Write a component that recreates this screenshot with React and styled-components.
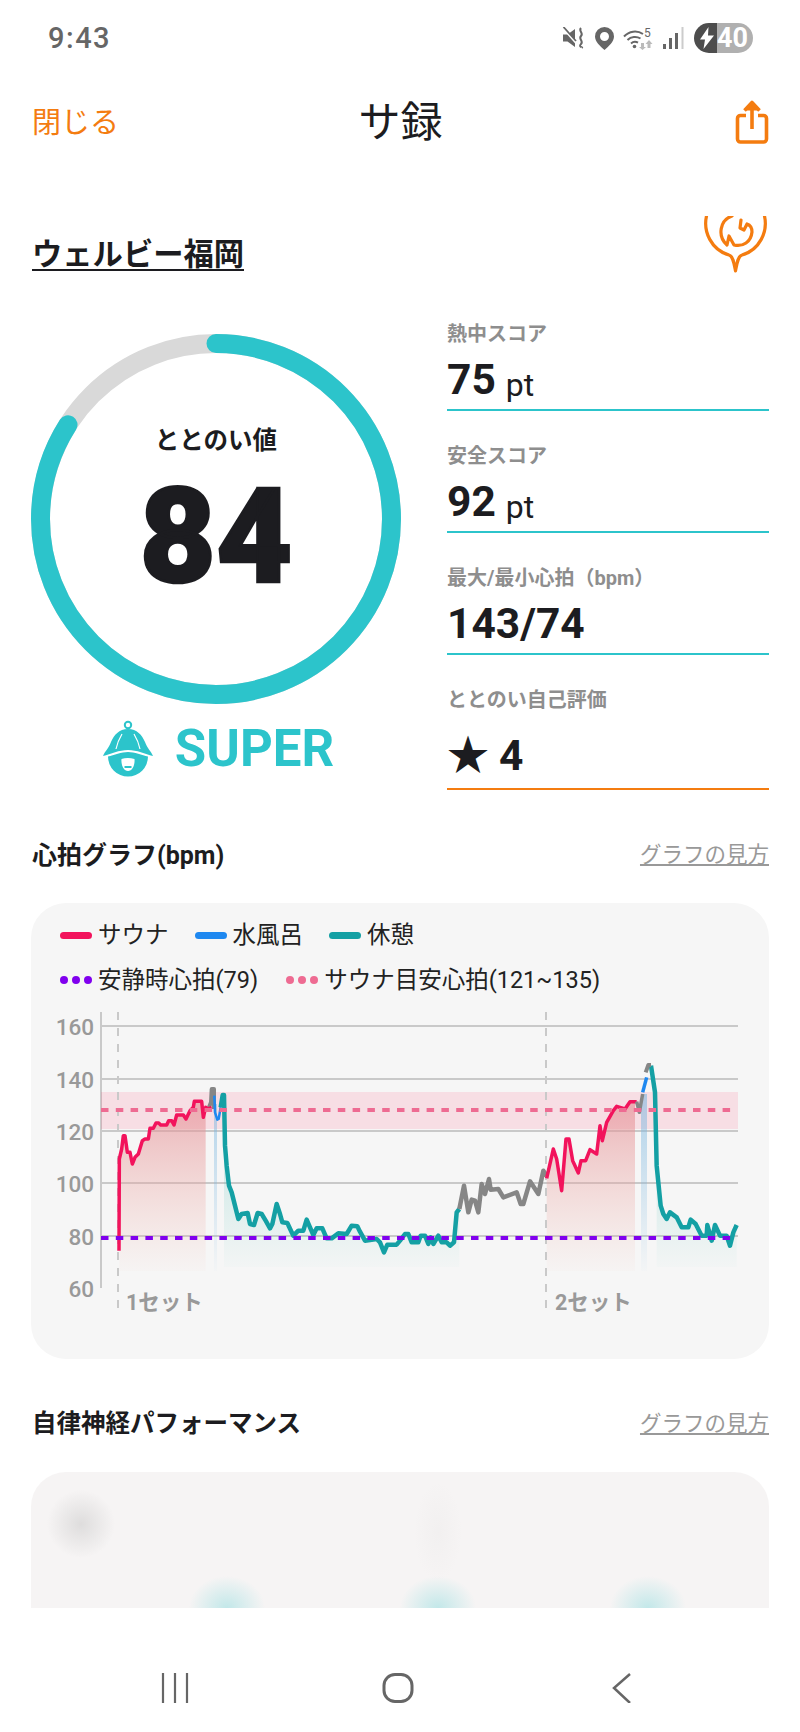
import React from 'react'
import styled, { createGlobalStyle } from 'styled-components'

const TEAL = '#2cc4cb'
const ORANGE = '#f47c10'
const INK = '#1c1c20'

const GlobalStyle = createGlobalStyle`
  html, body { margin: 0; padding: 0; background: #fff; }
  body { font-family: Roboto, "Noto Sans CJK JP", sans-serif; color: ${INK}; }
`

/* 心拍グラフ: traced from the picture, x = ox + zx / 3, y = 980 + zy / 3 */
const toPage = (pts, ox) => pts.map(([x, y]) => [ox + x / 3, 980 + y / 3])
const line = (pts) => pts.map((p) => p.join(',')).join(' ')
const area = (pts, bottom) =>
  `${pts[0][0]},${bottom} ${line(pts)} ${pts[pts.length - 1][0]},${bottom}`

const L = 30
const R = 400

const sauna1 = toPage([[267,815],[268,540],[275,510],[280,470],[285,470],[292,520],[300,520],[307,555],[315,535],[325,525],[337,485],[345,480],[355,480],[360,448],[370,448],[378,432],[386,432],[392,438],[410,438],[416,425],[425,425],[432,438],[440,408],[460,408],[468,420],[480,395],[490,385],[493,367],[515,367],[520,415],[527,385],[535,390],[545,385]], L)
const walk1 = toPage([[537,385],[543,370],[545,330],[552,330],[552,390]], L)
const water1 = toPage([[553,350],[555,400],[562,422],[566,420],[572,385]], L)
const rest1 = [
  ...toPage([[572,385],[578,348],[582,348],[585,500],[590,560],[597,620],[605,640],[615,680],[625,720],[635,705],[653,702],[660,735],[672,738],[683,702],[695,705],[707,725],[720,748],[727,735],[740,675],[750,705],[757,730],[772,732],[790,770],[805,755],[820,755],[830,722],[840,745],[850,768],[860,748],[877,748],[890,778],[905,778],[925,763],[950,765],[965,740],[982,742],[990,758],[1005,785],[1040,780],[1050,790],[1062,820],[1072,797],[1085,797],[1100,797]], L),
  ...toPage([[0,785],[15,765],[25,765],[35,790],[55,790],[62,770],[75,770],[85,795],[92,775],[100,795],[115,770],[125,790],[140,790],[150,800],[162,790],[170,700],[178,690]], R),
]
const walk2 = toPage([[178,690],[192,620],[205,700],[215,662],[225,665],[235,700],[245,615],[255,645],[267,600],[272,632],[295,630],[310,655],[350,640],[362,675],[370,675],[390,607],[415,645],[430,575],[440,590]], R)
const sauna2 = toPage([[440,598],[460,510],[470,540],[485,635],[498,480],[507,480],[518,545],[535,582],[543,545],[557,545],[570,512],[590,525],[600,440],[607,485],[620,430],[640,395],[650,382],[675,390],[690,368],[710,368]], R)
const walk3 = toPage([[710,368],[718,400],[728,345]], R)
const water2 = toPage([[728,340],[740,295]], R)
const walk4 = toPage([[737,280],[745,258],[753,258]], R)
const rest2 = toPage([[753,260],[765,340],[770,560],[782,680],[790,705],[800,720],[810,700],[830,715],[845,745],[865,745],[872,722],[887,735],[905,770],[920,770],[922,738],[935,785],[945,738],[960,770],[980,770],[990,800],[1000,760],[1010,738]], R)

const saunaFill1 = sauna1.filter(([x]) => x <= 207 && x > 119)
const saunaFill2 = sauna2.concat([[635, 1103]]).filter(([x]) => x <= 636)
const restFill1 = rest1.slice(2)

const gridRows = [
  { label: 160, y: 1027 },
  { label: 140, y: 1080 },
  { label: 120, y: 1132 },
  { label: 100, y: 1184 },
  { label: 80, y: 1237 },
]

const HeartChart = () => (
  <ChartSvg viewBox="31 996 738 339" width="738" height="339">
    <defs>
      <linearGradient id="redFill" gradientUnits="userSpaceOnUse" x1="0" y1="1110" x2="0" y2="1272">
        <stop offset="0" stopColor="#e58f95" stopOpacity="0.62" />
        <stop offset="1" stopColor="#f2b6aa" stopOpacity="0.04" />
      </linearGradient>
      <linearGradient id="tealFill" gradientUnits="userSpaceOnUse" x1="0" y1="1150" x2="0" y2="1268">
        <stop offset="0" stopColor="#4dbfb4" stopOpacity="0.24" />
        <stop offset="1" stopColor="#4dbfb4" stopOpacity="0.02" />
      </linearGradient>
      <linearGradient id="blueFill" gradientUnits="userSpaceOnUse" x1="0" y1="1090" x2="0" y2="1272">
        <stop offset="0" stopColor="#7db8e0" stopOpacity="0.6" />
        <stop offset="1" stopColor="#7db8e0" stopOpacity="0.02" />
      </linearGradient>
    </defs>

    {gridRows.map((row) => (
      <g key={row.label}>
        <line x1="101" x2="738" y1={row.y} y2={row.y} stroke="#c9c9c9" strokeWidth="2" />
        <AxisText x="94" y={row.y + 9} textAnchor="end">{row.label}</AxisText>
      </g>
    ))}
    <AxisText x="94" y="1298" textAnchor="end">60</AxisText>
    <line x1="101" x2="101" y1="1013" y2="1289" stroke="#c9c9c9" strokeWidth="2" />

    <rect x="101" y="1093" width="637" height="37" fill="#ff2f63" fillOpacity="0.12" />

    <polygon points={area(saunaFill1, 1272)} fill="url(#redFill)" />
    <polygon points={area(saunaFill2, 1272)} fill="url(#redFill)" />
    <polygon points={area(restFill1, 1268)} fill="url(#tealFill)" />
    <polygon points={area(rest2.slice(2), 1268)} fill="url(#tealFill)" />
    <rect x="214" y="1105" width="3" height="167" fill="url(#blueFill)" />
    <rect x="641" y="1095" width="6" height="177" fill="url(#blueFill)" />

    <line x1="118" x2="118" y1="1013" y2="1315" stroke="#c9c9c9" strokeWidth="2" strokeDasharray="8 8" />
    <line x1="546" x2="546" y1="1013" y2="1315" stroke="#c9c9c9" strokeWidth="2" strokeDasharray="8 8" />

    <Trace points={line(walk1)} stroke="#868686" strokeWidth="4" />
    <Trace points={line(sauna1)} stroke="#f2135c" strokeWidth="3.5" />
    <Trace points={line(water1)} stroke="#1e88f0" strokeWidth="2.5" />
    <Trace points={line(rest1)} stroke="#14a0a4" strokeWidth="4.5" />
    <Trace points={line(walk2)} stroke="#868686" strokeWidth="4.5" />
    <Trace points={line(sauna2)} stroke="#f2135c" strokeWidth="3.5" />
    <Trace points={line(walk3)} stroke="#868686" strokeWidth="3.5" />
    <Trace points={line(water2)} stroke="#1e88f0" strokeWidth="3.5" />
    <Trace points={line(rest2)} stroke="#14a0a4" strokeWidth="4.5" />
    <Trace points={line(walk4)} stroke="#868686" strokeWidth="4" />

    <line x1="101" x2="732" y1="1111" y2="1111" stroke="#ee6b92" strokeWidth="4" strokeDasharray="7.5 7.3" />
    <line x1="101" x2="732" y1="1239" y2="1239" stroke="#8000ee" strokeWidth="4" strokeDasharray="7.5 7.3" />

    <SetText x="126" y="1311">1セット</SetText>
    <SetText x="555" y="1311">2セット</SetText>
  </ChartSvg>
)

/* ICONS */
const MuteIcon = () => (
  <svg width="23" height="22" viewBox="0 0 23 22">
    <path d="M1 7.5h4.5L13 2v18l-7.500-5.500H1z" fill="#666" />
    <line x1="1" y1="1" x2="15" y2="17" stroke="#fff" strokeWidth="2" />
    <line x1="1.500" y1="0" x2="14" y2="14" stroke="#666" strokeWidth="1.800" />
    <path d="M19 1c-3 3 3 5 0 8s3 5 0 8 2 3 1 4" fill="none" stroke="#666" strokeWidth="2" />
  </svg>
)

const PinIcon = () => (
  <svg width="19" height="23" viewBox="0 0 19 23">
    <path fillRule="evenodd" d="M9.500 0a9.500 9.500 0 0 1 9.500 9.500c0 5-5 9.500-9.500 13.500C5 19 0 14.500 0 9.500A9.500 9.500 0 0 1 9.500 0zm0 5a4.500 4.500 0 1 0 0 9 4.500 4.500 0 0 0 0-9z" fill="#666" />
  </svg>
)

const WifiIcon = () => (
  <WifiSvg width="30" height="24" viewBox="0 0 30 24">
    <path d="M1 10.500c5-5.500 13-6.500 19-2.500M4.500 14c3.500-3.500 9-4 13-1.500M8 17.500c2-1.800 5-2 7-.8" fill="none" stroke="#666" strokeWidth="2" />
    <circle cx="11.500" cy="20.500" r="1.800" fill="#666" />
    <WifiBand x="21" y="11">5</WifiBand>
    <path d="M18 17h3v4h2l-3.500 3L16 21h2zM24.500 22v-4h-2l3.500-4 3.500 4h-2v4z" fill="#bbb" />
  </WifiSvg>
)

const SignalIcon = () => (
  <svg width="22" height="23" viewBox="0 0 22 23">
    <rect x="0" y="17" width="3" height="5" fill="#666" />
    <rect x="6" y="11" width="3" height="11" fill="#666" />
    <rect x="12" y="6" width="3" height="16" fill="#666" />
    <rect x="18.500" y="0" width="2" height="22" fill="#ccc" />
  </svg>
)

const BoltIcon = () => (
  <svg width="14" height="22" viewBox="0 0 14 22">
    <path d="M8.500 0L0 12.500h5L3.500 22 14 8.500H8z" fill="#fff" />
  </svg>
)

const ShareIcon = () => (
  <svg width="34" height="44" viewBox="0 0 34 44" fill="none" stroke={ORANGE} strokeWidth="3.600">
    <path d="M11 15.500H5.500a3 3 0 0 0-3 3V39a3 3 0 0 0 3 3h23a3 3 0 0 0 3-3V18.500a3 3 0 0 0-3-3H23" />
    <path d="M17 29V3" />
    <path d="M9.500 10.500L17 2.500l7.500 8" fill={ORANGE} strokeLinejoin="round" />
  </svg>
)

const OnsenIcon = () => (
  <svg width="64" height="57" viewBox="704 216 64 57" fill="none" stroke={ORANGE} strokeWidth="3.200" strokeLinecap="round" strokeLinejoin="round">
    <path d="M707 214C702 232 712 250 729 255c4 1 5 8 6.500 16 1.500-8 2.500-15 6.500-16 17-5 27-23 22-41" />
    <path d="M732 216c-12 4-15 20-5 29l2-9 5 9c9 2 17-3 18-13 0-4-2-7-5-8l-3 6-4-2 1-8" />
  </svg>
)

const BoyIcon = () => (
  <svg width="50" height="57" viewBox="104 719 50 57">
    <circle cx="129" cy="724" r="3.200" fill="none" stroke={TEAL} strokeWidth="2" />
    <path d="M104 755c2-5 6-8 8-14 3-7 8-13 17-13s14 6 17 13c2 6 6 9 8 14-8-2-16-6-25-6s-17 4-25 6z" fill={TEAL} />
    <path d="M123 733c-3 5-5 10-6 15M135 733c3 5 5 10 6 15" fill="none" stroke="#fff" strokeWidth="1.200" />
    <path d="M109 755.500c6-1.500 13.500-4.500 20-4.500s14 3 20 4.500a20 20 0 1 1-40 0z" fill={TEAL} />
    <path d="M122.500 758c4-1.200 8.500-1.200 13 0 .5 6-2 12-6.500 12s-7-6-6.500-12z" fill="#fff" />
    <rect x="125.500" y="765" width="7" height="2" fill={TEAL} />
  </svg>
)

const App = () => {
  const circumference = 2 * Math.PI * 175.5
  const arc = 0.84 * circumference

  return (
    <Page>
      <GlobalStyle />

      <StatusBar>
        <Clock>9:43</Clock>
        <StatusIcons>
          <MuteIcon />
          <PinIcon />
          <WifiIcon />
          <SignalIcon />
          <Battery>
            <BatteryCharge><BoltIcon /></BatteryCharge>
            <BatteryLevel>40</BatteryLevel>
          </Battery>
        </StatusIcons>
      </StatusBar>

      <Header>
        <CloseLink>閉じる</CloseLink>
        <Title>サ録</Title>
        <ShareButton><ShareIcon /></ShareButton>
      </Header>

      <VenueRow>
        <VenueName>ウェルビー福岡</VenueName>
        <OnsenIcon />
      </VenueRow>

      <Summary>
        <ScoreColumn>
          <Ring>
            <svg width="370" height="370" viewBox="0 0 370 370">
              <circle cx="185" cy="185" r="175.500" fill="none" stroke="#d9d9d9" strokeWidth="19" />
              <circle
                cx="185"
                cy="185"
                r="175.500"
                fill="none"
                stroke={TEAL}
                strokeWidth="19"
                strokeLinecap="round"
                strokeDasharray={`${arc} ${circumference}`}
                transform="rotate(-90 185 185)"
              />
            </svg>
            <RingText>
              <RingLabel>ととのい値</RingLabel>
              <RingValue>84</RingValue>
            </RingText>
          </Ring>
          <Rank>
            <BoyIcon />
            <RankName>SUPER</RankName>
          </Rank>
        </ScoreColumn>

        <Stats>
          <Stat>
            <StatLabel>熱中スコア</StatLabel>
            <StatValue>75<StatUnit>pt</StatUnit></StatValue>
          </Stat>
          <Stat>
            <StatLabel>安全スコア</StatLabel>
            <StatValue>92<StatUnit>pt</StatUnit></StatValue>
          </Stat>
          <Stat>
            <StatLabel>最大/最小心拍（bpm）</StatLabel>
            <StatValue>143/74</StatValue>
          </Stat>
          <Stat $accent={ORANGE}>
            <StatLabel>ととのい自己評価</StatLabel>
            <StatValue $tall><Star>★</Star>4</StatValue>
          </Stat>
        </Stats>
      </Summary>

      <SectionHead>
        <SectionTitle $size={25}>心拍グラフ(bpm)</SectionTitle>
        <HelpLink>グラフの見方</HelpLink>
      </SectionHead>

      <ChartCard>
        <Legend $gap={26}>
          <LegendItem><Swatch $color="#f2135c" />サウナ</LegendItem>
          <LegendItem><Swatch $color="#1e88f0" />水風呂</LegendItem>
          <LegendItem><Swatch $color="#14a0a4" />休憩</LegendItem>
        </Legend>
        <Legend $gap={28}>
          <LegendItem>
            <Dots $color="#8000ee"><i /><i /><i /></Dots>安静時心拍(79)
          </LegendItem>
          <LegendItem>
            <Dots $color="#ee6b92"><i /><i /><i /></Dots>サウナ目安心拍(121~135)
          </LegendItem>
        </Legend>
        <HeartChart />
      </ChartCard>

      <SectionHead>
        <SectionTitle $size={24.5}>自律神経パフォーマンス</SectionTitle>
        <HelpLink>グラフの見方</HelpLink>
      </SectionHead>

      <LoadingCard />

      <NavBar>
        <svg width="28" height="30" viewBox="0 0 28 30" stroke="#666" strokeWidth="2.200">
          <path d="M2 0v30M14 0v30M26 0v30" />
        </svg>
        <NavHome width="32" height="30" viewBox="0 0 32 30" fill="none" stroke="#666" strokeWidth="3">
          <rect x="2" y="1.500" width="28" height="27" rx="11" />
        </NavHome>
        <svg width="20" height="30" viewBox="0 0 20 30" fill="none" stroke="#666" strokeWidth="2.500">
          <path d="M18 1L2 15l16 15" />
        </svg>
      </NavBar>
    </Page>
  )
}

/* STYLED-COMPONENTS */

const Page = styled.div`
  width: 800px;
  height: 1732px;
  overflow: hidden;
  background: #fff;
`

const StatusBar = styled.div`
  display: flex;
  align-items: center;
  justify-content: space-between;
  height: 76px;
  padding: 0 47px 0 48px;
  box-sizing: border-box;
`

const Clock = styled.div`
  font-size: 29px;
  font-weight: 500;
  letter-spacing: 1.5px;
  color: #666;
`

const StatusIcons = styled.div`
  display: flex;
  align-items: center;
  gap: 9.500px;
`

const WifiSvg = styled.svg`
  overflow: visible;
`

const WifiBand = styled.text`
  font-size: 12px;
  fill: #666;
`

const Battery = styled.div`
  display: flex;
  width: 59px;
  height: 30px;
  border-radius: 15px;
  overflow: hidden;
`

const BatteryCharge = styled.div`
  display: flex;
  align-items: center;
  justify-content: center;
  width: 23px;
  padding-left: 3px;
  box-sizing: border-box;
  background: #4d4d4d;
`

const BatteryLevel = styled.div`
  flex: 1;
  background: #b0b0b0;
  color: #fff;
  font-size: 27px;
  font-weight: 700;
  line-height: 30px;
`

const Header = styled.div`
  display: grid;
  grid-template-columns: 1fr auto 1fr;
  align-items: center;
  height: 92px;
  padding: 0 31px 0 32px;
  box-sizing: border-box;
`

const CloseLink = styled.div`
  margin-bottom: 4px;
  font-size: 29px;
  color: ${ORANGE};
`

const Title = styled.div`
  margin-top: 2px;
  font-size: 42px;
  line-height: 46px;
  color: ${INK};
`

const ShareButton = styled.div`
  display: flex;
  justify-content: flex-end;
`

const VenueRow = styled.div`
  display: flex;
  align-items: flex-start;
  justify-content: space-between;
  height: 73px;
  margin-top: 48px;
  padding: 0 32px;
  box-sizing: border-box;
`

const VenueName = styled.div`
  margin-top: 24px;
  font-size: 30.300px;
  font-weight: 700;
  line-height: 29px;
  border-bottom: 2px solid ${INK};
`

const Summary = styled.div`
  display: flex;
  gap: 46px;
  padding-left: 31px;
`

const ScoreColumn = styled.div`
  display: flex;
  flex-direction: column;
  align-items: center;
  width: 370px;
  padding-top: 45px;
`

const Ring = styled.div`
  position: relative;
  width: 370px;
  height: 370px;
`

const RingText = styled.div`
  position: absolute;
  inset: 0;
  display: flex;
  flex-direction: column;
  align-items: center;
`

const RingLabel = styled.div`
  margin-top: 89px;
  font-size: 24.500px;
  font-weight: 700;
  line-height: 36px;
`

const RingValue = styled.div`
  margin-top: 10px;
  font-size: 132px;
  font-weight: 900;
  line-height: 136px;
  -webkit-text-stroke: 2.500px ${INK};
`

const Rank = styled.div`
  display: flex;
  align-items: center;
  gap: 22px;
  margin: 15px 0 0 5px;
`

const RankName = styled.div`
  font-size: 51px;
  font-weight: 700;
  color: ${TEAL};
`

const Stats = styled.div`
  display: flex;
  flex-direction: column;
  width: 322px;
`

const Stat = styled.div`
  padding: 31px 0 4px;
  border-bottom: 2px solid ${(p) => p.$accent || TEAL};
`

const StatLabel = styled.div`
  font-size: 20px;
  font-weight: 700;
  line-height: 28px;
  color: #8e8e8e;
`

const StatValue = styled.div`
  display: flex;
  align-items: baseline;
  height: ${(p) => (p.$tall ? '63px' : '50px')};
  margin-top: 7px;
  padding-top: ${(p) => (p.$tall ? '6px' : '0')};
  box-sizing: border-box;
  font-size: 42.500px;
  font-weight: 700;
  line-height: 50px;
`

const StatUnit = styled.span`
  margin-left: 10px;
  font-size: 32px;
  font-weight: 400;
  transform: translateY(2px);
`

const Star = styled.span`
  margin-right: 10px;
  font-size: 42px;
  font-family: "Noto Sans CJK JP", sans-serif;
`

const SectionHead = styled.div`
  display: flex;
  align-items: center;
  justify-content: space-between;
  height: 36px;
  margin-top: 46px;
  padding: 0 31px 3px 32px;
  box-sizing: border-box;
`

const SectionTitle = styled.div`
  font-size: ${(p) => p.$size}px;
  font-weight: 700;
`

const HelpLink = styled.div`
  font-size: 21.500px;
  color: #999;
  text-decoration: underline;
`

const ChartCard = styled.div`
  margin: 31px 31px 0;
  padding: 17px 0 25px;
  border-radius: 35px;
  background: #f6f6f6;
`

const Legend = styled.div`
  display: flex;
  gap: ${(p) => p.$gap}px;
  height: 30px;
  margin: 0 0 15px 29px;
  &:nth-of-type(2) { margin-bottom: 0; }
`

const LegendItem = styled.div`
  display: flex;
  align-items: center;
  gap: 6px;
  font-size: 23.500px;
  line-height: 30px;
  color: #222;
`

const Swatch = styled.span`
  width: 32px;
  height: 7px;
  border-radius: 4px;
  background: ${(p) => p.$color};
`

const Dots = styled.span`
  display: flex;
  gap: 4px;
  width: 32px;
  i {
    width: 8px;
    height: 8px;
    border-radius: 50%;
    background: ${(p) => p.$color};
  }
`

const ChartSvg = styled.svg`
  display: block;
`

const Trace = styled.polyline`
  fill: none;
  stroke-linejoin: round;
`

const AxisText = styled.text`
  font-size: 22.500px;
  font-weight: 500;
  fill: #999;
`

const SetText = styled.text`
  font-size: 21.500px;
  font-weight: 700;
  fill: #999;
`

const LoadingCard = styled.div`
  height: 136px;
  margin: 31px 31px 0;
  border-radius: 35px 35px 0 0;
  background:
    radial-gradient(circle 34px at 50px 52px, rgba(160, 160, 160, 0.28), rgba(160, 160, 160, 0)),
    radial-gradient(ellipse 38px 32px at 196px 136px, rgba(60, 200, 205, 0.28), rgba(60, 200, 205, 0)),
    radial-gradient(ellipse 38px 32px at 407px 136px, rgba(60, 200, 205, 0.28), rgba(60, 200, 205, 0)),
    radial-gradient(ellipse 38px 32px at 617px 136px, rgba(60, 200, 205, 0.28), rgba(60, 200, 205, 0)),
    radial-gradient(ellipse 24px 50px at 407px 60px, rgba(160, 160, 160, 0.05), rgba(160, 160, 160, 0)),
    #f6f4f4;
`

const NavBar = styled.div`
  display: flex;
  justify-content: space-between;
  align-items: center;
  height: 30px;
  margin-top: 65px;
  padding: 0 168px 0 161px;
`

const NavHome = styled.svg`
  margin-right: 5px;
`

export default App
